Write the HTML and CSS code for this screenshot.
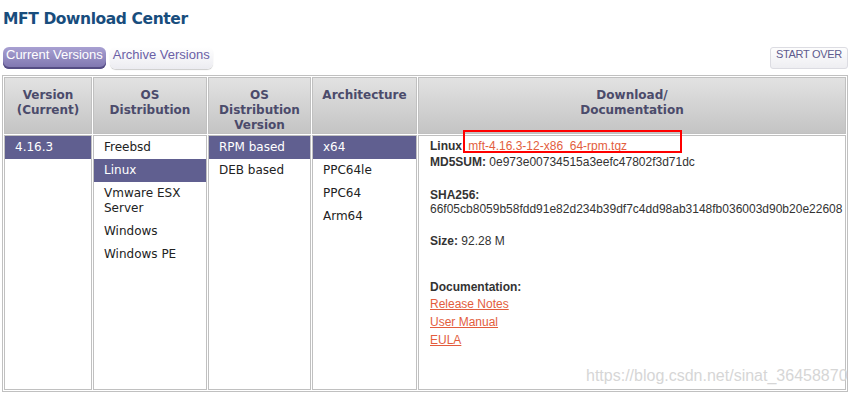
FILE: index.html
```html
<!DOCTYPE html>
<html lang="en">
<head>
    <meta charset="UTF-8">
    <title>MFT Download Center</title>
    <link rel="stylesheet" href="styles.css">
</head>
<body>
<div class="page">
    <h2 class="title">MFT Download Center</h2>
    <div class="bar">
        <div class="tabs">
            <a class="tab cur">Current Versions</a>
            <a class="tab">Archive Versions</a>
        </div>
        <a class="reset">START OVER</a>
    </div>
    <table class="grid">
        <colgroup>
            <col class="c1"><col class="c2"><col class="c3"><col class="c4"><col class="c5">
        </colgroup>
        <tr class="head">
            <th>Version<br>(Current)</th>
            <th>OS<br>Distribution</th>
            <th>OS<br>Distribution<br>Version</th>
            <th>Architecture</th>
            <th>Download/<br>Documentation</th>
        </tr>
        <tr class="body">
            <td>
                <ul class="opts">
                    <li class="on">4.16.3</li>
                </ul>
            </td>
            <td>
                <ul class="opts">
                    <li>Freebsd</li>
                    <li class="on">Linux</li>
                    <li>Vmware ESX Server</li>
                    <li>Windows</li>
                    <li>Windows PE</li>
                </ul>
            </td>
            <td>
                <ul class="opts">
                    <li class="on">RPM based</li>
                    <li>DEB based</li>
                </ul>
            </td>
            <td>
                <ul class="opts">
                    <li class="on">x64</li>
                    <li>PPC64le</li>
                    <li>PPC64</li>
                    <li>Arm64</li>
                </ul>
            </td>
            <td class="info">
                <p class="file"><b>Linux</b> <a href="#">mft-4.16.3-12-x86_64-rpm.tgz</a><span class="mark"></span></p>
                <p class="md5"><b>MD5SUM:</b> 0e973e00734515a3eefc47802f3d71dc</p>
                <p class="sha-label"><b>SHA256:</b></p>
                <p>66f05cb8059b58fdd91e82d234b39df7c4dd98ab3148fb036003d90b20e22608</p>
                <p class="size"><b>Size:</b> 92.28 M</p>
                <p class="doc-label"><b>Documentation:</b></p>
                <ul class="docs">
                    <li><a href="#">Release Notes</a></li>
                    <li><a href="#">User Manual</a></li>
                    <li><a href="#">EULA</a></li>
                </ul>
            </td>
        </tr>
    </table>
</div>
<div class="watermark">https://blog.csdn.net/sinat_36458870</div>
</body>
</html>
```

FILE: styles.css
```css
* {margin:0; padding:0; list-style:none;}

body {font-family:"DejaVu Sans", Verdana, sans-serif; font-size:12px; color:#222; background:#fff;}
.page {padding:10px 2px 0;}

.title {font-size:15.5px; line-height:18px; letter-spacing:-0.4px; color:#184d7d; padding-left:1px;}

.bar {display:flex; justify-content:space-between; align-items:center; height:22px; margin-top:19px;}
.tabs {display:flex; gap:4px; padding-left:1px;}
.tab {display:block; height:22px; line-height:21px; padding:0 3px; border-radius:6px; box-sizing:border-box;
    font:13px "Liberation Sans", Arial, sans-serif; color:#6a5fa6; background:linear-gradient(#fff, #ececf1); box-shadow:0 1px 1px #ccc;}
.tab.cur {color:#fff; background:linear-gradient(#a8a0d2, #7d74ae); box-shadow:inset 0 -2px 0 #554d84;}
.reset {display:block; height:22px; line-height:21px; padding:0 5px; margin-right:5px; box-sizing:border-box;
    border:1px solid #dcdce2; border-radius:3px; background:linear-gradient(#fdfdfd, #eeeef2);
    font:11px "Liberation Sans", Arial, sans-serif; letter-spacing:-0.3px; color:#5e5a8e;}

.grid {width:846px; margin-top:6px; table-layout:fixed; border:1px solid #c0c0c0; border-spacing:1px;}
.grid .c1 {width:88px;}
.grid .c2 {width:114px;}
.grid .c3 {width:103px;}
.grid .c4 {width:105px;}
.grid .c5 {width:428px;}
.grid th, .grid td {border:1px solid #c0c0c0; vertical-align:top; box-sizing:border-box;}

.head th {height:54px; padding-top:10px; line-height:15px; font-size:12px; color:#4b4b6b;
    background:linear-gradient(#e2e2e2, #c4c4c4);}
.body td {height:255px; padding-top:0;}

.opts li {padding:4px 10px; line-height:15px;}
.opts li.on {background:#605f90; color:#fff;}

.info {font:12px "Liberation Sans", Arial, sans-serif; color:#333;}
.body .info {padding:3px 0 0 11px;}
.info p {line-height:14px;}
.info b {color:#333;}
.info a {color:#e35d3d; text-decoration:underline;}
.info .file {position:relative;}
.info .file a {margin-left:3px;}
.info .md5 {margin-top:2px;}
.info .sha-label {margin-top:19px;}
.info .size {margin-top:18px;}
.info .doc-label {margin-top:32px;}
.docs {margin-top:1px;}
.docs li {line-height:18px;}

/* annotation box drawn over the screenshot */
.mark {position:absolute; left:33px; top:-9px; width:219px; height:23px; box-sizing:border-box; border:2px solid #f00;}

.watermark {position:absolute; left:586px; top:367px; font:16px "Liberation Sans", Arial, sans-serif; line-height:18px; color:#d6d6d6;}
```
